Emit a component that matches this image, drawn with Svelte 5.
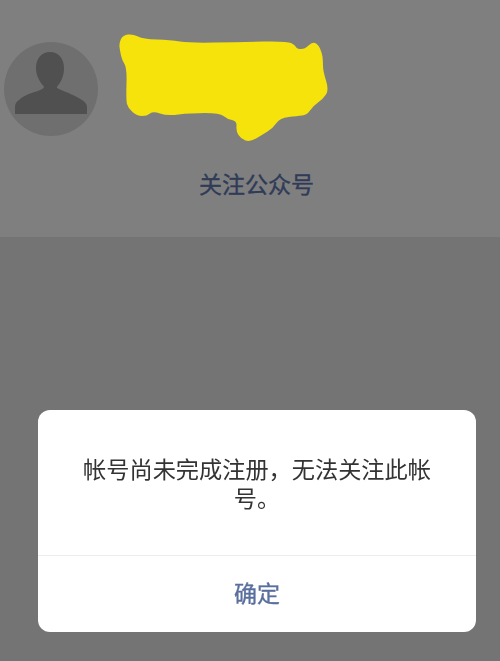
<script lang="ts">
  const title = '关注公众号';
  const message = '帐号尚未完成注册，无法关注此帐号。';

  // outline of the scribble over the account name, smoothed through midpoints
  const scribble = [
    [119, 43], [123, 35], [133, 34], [143, 39], [170, 40], [190, 43], [240, 42], [287, 41],
    [295, 45], [297, 49], [305, 49], [312, 42], [318, 44], [322, 53], [323, 61], [323, 71],
    [329, 90], [323, 99], [313, 106], [307, 115], [297, 116], [280, 118], [273, 128], [262, 135],
    [250, 142], [241, 139], [236, 131], [237, 121], [227, 119], [220, 113], [190, 113], [167, 116],
    [153, 111], [147, 116], [137, 116], [128, 108], [126, 100], [127, 68], [122, 60], [120, 51]
  ];

  function smooth(points: number[][]): string {
    const mid = (a: number[], b: number[]) => `${(a[0] + b[0]) / 2} ${(a[1] + b[1]) / 2}`;
    let d = `M${mid(points[points.length - 1], points[0])}`;
    points.forEach((p, i) => {
      d += `Q${p[0]} ${p[1]} ${mid(p, points[(i + 1) % points.length])}`;
    });
    return d + 'z';
  }
</script>

<div class="page">
  <header class="profile">
    <div class="avatar">
      <svg viewBox="0 0 94 94" width="94" height="94" aria-hidden="true">
        <circle cx="47" cy="47" r="47" fill="#dedede" />
        <path
          d="M46 10C37 10 32 17 32 26C32 34 36 40 39.500 44C41 46 38 47 35 48.500C28 51 20 53 15 58C12 60 11 62 11 65V72H83V65C83 62 81 60 78 58C72 54 62 50 56 47.500C53.500 46.500 52 45.500 53.500 44C57 40 60 34 60 26C60 17 55 10 46 10z"
          fill="#a0a0a0"
        />
      </svg>
    </div>
    <button class="follow">{title}</button>
  </header>

  <div class="mask">
    <div class="dialog">
      <p class="message">{message}</p>
      <button class="confirm">确定</button>
    </div>
  </div>

  <svg class="scribble" viewBox="0 0 500 661" width="500" height="661" aria-hidden="true">
    <path d={smooth(scribble)} fill="#f7e30c" />
  </svg>
</div>

<style>
  :global(body) {
    margin: 0;
    background: #e8e8e8;
  }

  .page {
    width: 500px;
    height: 661px;
    overflow: hidden;
    background: #e8e8e8;
    font-family: 'Noto Sans CJK SC', 'Liberation Sans', sans-serif;
  }

  .profile {
    height: 237px;
    box-sizing: border-box;
    padding-top: 42px;
    background: #ffffff;
    display: flex;
    flex-direction: column;
  }

  .avatar {
    margin-left: 4px;
    height: 94px;
  }

  .avatar svg {
    display: block;
  }

  .follow {
    align-self: flex-start;
    margin: 31px 0 0 199px;
    padding: 0;
    border: none;
    background: none;
    font: inherit;
    font-size: 23px;
    line-height: 32px;
    color: #5e76ae;
    -webkit-text-stroke: 0.35px #5e76ae;
  }

  .mask {
    position: fixed;
    inset: 0;
    background: rgba(0, 0, 0, 0.5);
    display: flex;
    align-items: flex-end;
    padding: 0 24px 29px 38px;
  }

  .dialog {
    flex: 1;
    background: #ffffff;
    border-radius: 12px;
    overflow: hidden;
  }

  .message {
    margin: 0;
    height: 146px;
    box-sizing: border-box;
    padding: 44px 44px 0;
    font-size: 23.2px;
    line-height: 29px;
    color: #333333;
    text-align: center;
    border-bottom: 1px solid #ededed;
  }

  .confirm {
    display: block;
    box-sizing: border-box;
    width: 100%;
    height: 76px;
    padding: 0 0 4px;
    border: none;
    background: none;
    font: inherit;
    font-size: 23px;
    color: #5a6f9e;
    -webkit-text-stroke: 0.35px #5a6f9e;
  }

  .scribble {
    position: fixed;
    top: 0;
    left: 0;
    pointer-events: none;
  }
</style>
